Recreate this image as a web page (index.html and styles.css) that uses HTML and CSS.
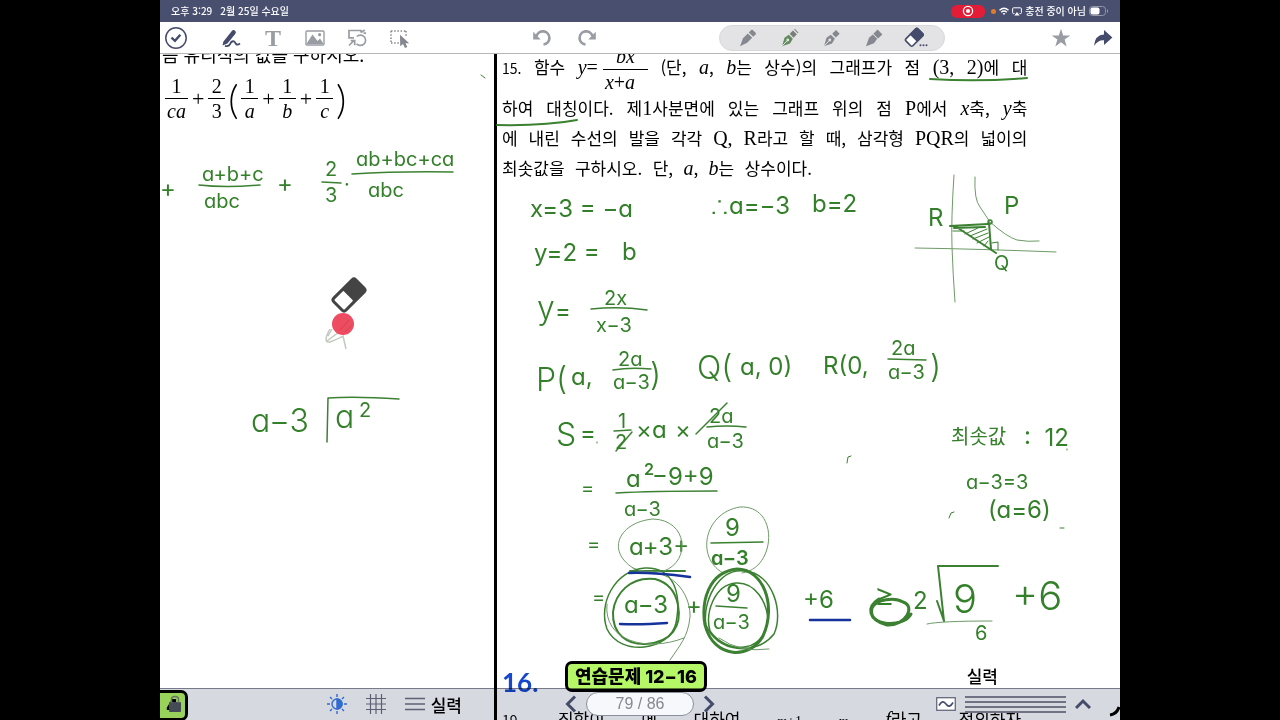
FILE: index.html
```html
<!DOCTYPE html>
<html lang="ko">
<head>
<meta charset="utf-8">
<title>연습문제 12-16</title>
<meta name="viewport" content="width=device-width, initial-scale=1">
<link rel="stylesheet" href="styles.css">
</head>
<body>
<div class="app">
  <header class="status">
    <span>오후 3:29</span>
    <span>2월 25일 수요일</span>
    <div class="status-right">
      <span class="rec"><svg width="12" height="12" viewBox="0 0 12 12"><circle cx="6" cy="6" r="4.6" fill="none" stroke="#fff" stroke-width="1.3"/><circle cx="6" cy="6" r="2.1" fill="#fff"/></svg></span>
      <span class="dot"></span>
      <svg width="10" height="9" viewBox="0 0 10 9" fill="none" stroke="#fff" stroke-width="1.4"><path d="M.5 3.2Q5-.8 9.5 3.2M2.2 5.2Q5 2.8 7.8 5.2"/><path d="M3.6 6.4Q5 5.4 6.4 6.4L5 8Z" fill="#fff" stroke="none"/></svg>
      <svg width="10" height="9" viewBox="0 0 10 9"><path d="M2.5 6.6H1.6Q.6 6.6.6 5.6V1.8Q.6.8 1.6.8H8.4Q9.4.8 9.4 1.8V5.6Q9.4 6.6 8.4 6.6H7.5" fill="none" stroke="#fff"/><path d="M5 5 7.6 8.4H2.4Z" fill="#fff"/></svg>
      <span>충전 중이 아님</span>
      <svg width="20" height="10" viewBox="0 0 20 10"><rect x=".5" y=".5" width="16" height="9" rx="3" fill="none" stroke="#9297ab"/><rect x="1.5" y="1.5" width="9" height="7" rx="2" fill="#fff"/><path d="M18.5 3.5V6.5" stroke="#9297ab"/></svg>
    </div>
  </header>

  <nav class="toolbar" aria-label="도구">
    <div class="tools">
      <button class="done" aria-label="완료"><svg width="24" height="24" viewBox="0 0 24 24" fill="none" stroke="#454b6b"><circle cx="12" cy="12" r="10.2" stroke-width="1.5"/><path d="M7.5 11.7 11 14.8 16.3 8.8" stroke-width="2.4"/></svg></button>
      <button aria-label="펜"><svg width="24" height="24" viewBox="0 0 24 24"><path d="M4.3 15.8 12.6 5.2Q14.2 3.2 16 4.6 17.8 6.2 16.2 8.1L8.4 17.6 3.5 19.6Z" fill="#454b6b"/><path d="M6 19.8Q9.5 21 11 18.2 12.6 14.6 15 15.4 16.2 16.4 17 18 18.4 19.4 21 17.6" fill="none" stroke="#454b6b" stroke-width="1.8"/></svg></button>
      <button class="letter" aria-label="글자">T</button>
      <button aria-label="사진"><svg width="24" height="24" viewBox="0 0 24 24"><rect x="3" y="5" width="18" height="14" rx="1" fill="none" stroke="#999ca2" stroke-width="1.4"/><path d="M4 17 9.5 8.5 14.5 15 17 12.5 20 17V18H4Z" fill="#999ca2"/><circle cx="16.6" cy="8.7" r="1.6" fill="#999ca2"/></svg></button>
      <button aria-label="도형"><svg width="24" height="24" viewBox="0 0 24 24" fill="none" stroke="#999ca2" stroke-width="1.7"><path d="M9 11.8H4V4.5H16V6.5M16 6.5 19.8 4M18.5 7.2H21"/><path d="M11.8 10.5A5.2 5.2 0 1 1 11.5 17.7M4 19.5 9.5 14M5.7 14.7H9.7V19.2"/></svg></button>
      <button aria-label="선택"><svg width="24" height="24" viewBox="0 0 24 24"><path d="M4 5H19M4 5V17M4 17H13M19 5V10" fill="none" stroke="#85888e" stroke-width="1.5" stroke-dasharray="1.5 1.7"/><path d="M13 8.8 22.2 17.2H18.5L20.3 21 18 22 16 18 13.2 20.2Z" fill="#85888e"/></svg></button>
    </div>
    <div class="history">
      <button aria-label="실행 취소"><svg width="22" height="22" viewBox="0 0 22 22"><path d="M5.5 9A6.6 6.6 0 1 1 12.5 17.5" fill="none" stroke="#999ca2" stroke-width="2.7"/><path d="M2.2 4.8V12.4H9.7Z" fill="#999ca2"/></svg></button>
      <button aria-label="다시 실행"><svg width="22" height="22" viewBox="0 0 22 22"><path d="M16.5 9A6.6 6.6 0 1 0 9.5 17.5" fill="none" stroke="#999ca2" stroke-width="2.7"/><path d="M19.8 4.8V12.4H12.3Z" fill="#999ca2"/></svg></button>
    </div>
    <div class="pens">
      <button aria-label="연필"><svg width="22" height="22" viewBox="0 0 22 22" fill="#85888e"><path d="M3 19.2 6 11.3 10.8 6.4 15.2 10.8 10.2 15.8Z"/><path d="M11.8 5.4 14.2 3Q15 2.3 15.8 3L18.6 5.8Q19.4 6.6 18.6 7.4L16.2 9.8Z"/></svg></button>
      <button aria-label="초록 펜"><svg width="22" height="22" viewBox="0 0 22 22"><path d="M3 19.2 5.5 10.7 9.8 7.8 13.8 11.8 11 16.4Z" fill="#608b5b"/><path d="M3 19.2 8.2 13.6" stroke="#e3e3e5"/><circle cx="8.8" cy="13" r="1.4" fill="#e3e3e5"/><path d="M10.7 6.8 14 3.5 17.8 7.3 14.6 10.7ZM15 2.5 16 2 19.4 5.4 18.8 6.3Z" fill="#777f78"/></svg></button>
      <button aria-label="만년필"><svg width="22" height="22" viewBox="0 0 22 22" fill="#85888e"><path d="M3 19.2 5.5 10.7 9.8 7.8 13.8 11.8 11 16.4Z"/><path d="M3 19.2 8.2 13.6" stroke="#e3e3e5"/><circle cx="8.8" cy="13" r="1.4" fill="#e3e3e5"/><path d="M11.2 6.8 15 3 18.7 6.7 14.8 10.6Z"/></svg></button>
      <button aria-label="형광펜"><svg width="22" height="22" viewBox="0 0 22 22" fill="#85888e"><path d="M3 19.2 6 10.8 9.8 7.4 14.2 11.8 11 16.2Z"/><path d="M10.4 6.8 14.6 2.6 19.4 7.4 15 11.6Z"/></svg></button>
      <button aria-label="지우개"><svg width="26" height="24" viewBox="0 0 26 24"><g transform="rotate(-45 11 11.5)"><rect x="2.8" y="6.7" width="17" height="9.8" rx="1.5" fill="#fff" stroke="#454b6b" stroke-width="1.7"/><path d="M10 6H19Q20.5 6 20.5 7.5V15.5Q20.5 17 19 17H10Z" fill="#454b6b"/></g><g fill="#454b6b"><circle cx="17.5" cy="19.3" r="1"/><circle cx="20.5" cy="19.3" r="1"/><circle cx="23.5" cy="19.3" r="1"/></g></svg></button>
    </div>
    <div class="actions">
      <button aria-label="즐겨찾기"><svg width="22" height="22" viewBox="0 0 22 22"><path d="M11 1.8 13.2 8.6H20.3L14.6 12.6 16.7 19.4 11 15.3 5.3 19.4 7.4 12.6 1.7 8.6H8.8Z" fill="#999ca2"/></svg></button>
      <button aria-label="공유"><svg width="22" height="22" viewBox="0 0 22 22"><path d="M2 19Q3 8 12 7.6V3L20.4 10.6 12 18V13.2Q6 12.6 2 19Z" fill="#454b6b"/></svg></button>
    </div>
  </nav>

  <main class="page">
    <section class="col col-left">
      <p class="ask">음 유리식의 값을 구하시오.</p>
      <div class="formula">
        <span class="frac"><span>1</span><i>ca</i></span><span class="plus">+</span>
        <span class="frac"><span>2</span><span>3</span></span>
        <span class="paren">(</span>
        <span class="frac"><span>1</span><i>a</i></span><span class="plus">+</span>
        <span class="frac"><span>1</span><i>b</i></span><span class="plus">+</span>
        <span class="frac"><span>1</span><i>c</i></span>
        <span class="paren">)</span>
      </div>
      <div class="next-left"><span class="tag tag-cut">4</span><strong class="level">실력</strong></div>
    </section>

    <section class="col col-right">
      <div class="problem">
        <p class="line line-frac"><small>15.</small> 함수 <span class="m"><i>y</i>=<span class="frac wide"><i>bx</i><span><i>x</i>+<i>a</i></span></span></span> (단, <i class="m">a</i>, <span><i class="m">b</i>는</span> 상수)의 그래프가 점 <span class="m">(3,</span> <span class="m">2)</span>에 대</p>
        <p class="line">하여 대칭이다. 제<span class="m">1</span>사분면에 있는 그래프 위의 점 <span class="m">P</span>에서 <i class="m">x</i>축, <i class="m">y</i>축</p>
        <p class="line">에 내린 수선의 발을 각각 <span class="m">Q,</span> <span class="m">R</span>라고 할 때, 삼각형 <span class="m">PQR</span>의 넓이의</p>
        <p class="line line-last">최솟값을 구하시오. 단, <i class="m">a</i>, <i class="m">b</i>는 상수이다.</p>
      </div>
      <div class="next">
        <div class="heading"><b class="number">16.</b><span class="tag">연습문제 12−16</span><strong class="level">실력</strong></div>
        <p class="line"><small>19.</small> 집합이 에 대하여 <small class="m"><i>m</i>+1</small> <small class="m"><i>m</i></small> <span><i class="m">f</i>라고</span> 정의하자</p>
      </div>
    </section>

    <svg class="ink" viewBox="160 54 960 666" preserveAspectRatio="xMidYMin slice">
      <g class="hand">
        <!-- left column working -->
        <g class="s20">
          <text x="160" y="197" class="s24">+</text><text x="202" y="181">a+b+c</text><text x="204" y="208">abc</text>
          <text x="277" y="192" class="s24">+</text><text x="325" y="176">2</text><text x="325" y="202">3</text><text x="344" y="191">·</text>
          <text x="356" y="166">ab+bc+ca</text><text x="368" y="197">abc</text>
        </g>
        <text class="s32" x="251" y="432">a−3</text><text class="s32" x="335" y="428">a</text><text class="s20" x="359" y="417">2</text>
        <!-- right column working -->
        <g class="s24">
          <text x="530" y="217">x=3 = −a</text><text x="710" y="214">∴a=−3</text><text x="812" y="212">b=2</text>
          <text x="534" y="261">y=2 =</text><text x="622" y="260">b</text>
          <text x="537" y="319" class="s32">y</text><text x="555" y="319">=</text>
          <text x="928" y="226">R</text><text x="1004" y="214">P</text><text x="994" y="270" class="s20">Q</text>
        </g>
        <g class="s20">
          <text x="604" y="305">2x</text><text x="596" y="332">x−3</text>
          <text x="618" y="366">2a</text><text x="613" y="389">a−3</text>
          <text x="891" y="355">2a</text><text x="888" y="379">a−3</text>
          <text x="709" y="423">2a</text><text x="707" y="448">a−3</text>
          <text x="618" y="428">1</text><text x="615" y="449">2</text>
          <text x="624" y="516">a−3</text><text x="581" y="495">=</text><text x="587" y="551">=</text><text x="592" y="604">=</text>
        </g>
        <g class="s24">
          <text class="s32" x="536" y="391">P(</text><text x="571" y="385">a,</text><text class="s32" x="650" y="386">)</text>
          <text class="s32" x="697" y="379">Q(</text><text x="740" y="375">a, 0)</text>
          <text x="823" y="374">R(0,</text><text class="s32" x="930" y="378">)</text>
          <text class="s32" x="556" y="446">S</text><text x="580" y="441">=</text>
          <text x="636" y="438">×</text><text x="652" y="438">a</text><text x="675" y="438">×</text>
          <text x="626" y="487">a</text><text x="652" y="485">−9+9</text>
          <text x="629" y="555">a+3+</text><text x="725" y="536">9</text>
          <text x="711" y="565" class="bold s20">a−3</text>
          <text x="624" y="613">a−3</text><text x="686" y="614">+</text><text x="726" y="602">9</text><text x="713" y="629" class="s20">a−3</text>
          <text x="803" y="608">+6</text><text x="913" y="609">2</text>
          <text x="874" y="606" class="s32">≥</text>
          <text x="953" y="613" class="s40">9</text><text x="1012" y="610" class="s40">+6</text><text x="975" y="640" class="s20">6</text>
        </g>
        <text class="s16 bold" x="644" y="475">2</text>
        <text class="s20 ko" x="951" y="444">최솟값</text><text class="s24" x="1024" y="446">:  12</text>
        <text class="s20" x="966" y="489">a−3=3</text><text class="s24" x="988" y="518">(a=6)</text>
      </g>

      <g class="stroke">
        <path d="M199 185Q225 188 260 185M322 182 341 183M352 174Q400 171 453 172"/>
        <path d="M327 442 328 398Q355 396 399 399"/>
        <path d="M591 309Q620 306 647 310M613 370Q630 367 651 369M888 359 926 360"/>
        <path d="M614 431 631 430M616 451 632 432M696 434 727 403M707 427Q727 425 746 427"/>
        <path d="M616 493Q650 491 717 491M711 543 763 542M716 606 747 608"/>
        <path class="thin" d="M927 624Q940 621 992 621"/>
        <path class="mid" d="M937 601 944 621 938 566 998 566"/>
        <path class="mid" d="M497 125Q545 126 577 120M930 79Q980 82 1027 78M630 571H685"/>
        <!-- hyperbola sketch -->
        <path class="thin" d="M954 175Q951 220 952 247Q953 275 955 302M915 248Q980 249 1056 252M975 177Q974 200 980 207L990 222Q1007 237 1017 240 1028 242 1039 241"/>
        <path class="mid" d="M950 226 988 224M954 228 985 227M955 226 996 253M989 223 991 249"/>
        <path class="fine" d="M953 231H964M992 243 998 242V250M965 234 978 228M970 236 987 229M973 239 988 233M977 243 989 237M984 246 988 241"/>
        <circle cx="990" cy="222" r="2"/>
        <!-- rings round the paired terms -->
        <path class="thin" d="M633 568C605 550 620 522 653 519C688 520 691 561 664 571Q645 574 633 568ZM725 574C695 560 703 513 740 507C780 505 776 569 742 573"/>
        <path d="M645 568C614 571 598 604 607 629C620 657 670 651 676 623C682 592 673 567 645 568Z"/>
        <path class="mid" d="M655 579C630 576 615 594 613 612C612 635 628 645 646 644C672 642 682 626 678 605Q674 584 655 579Z"/>
        <path class="thin" d="M636 572C680 567 691 602 690 617C688 637 680 645 670 660M607 604C603 640 645 653 684 638"/>
        <path class="bold-stroke" d="M737 569C708 572 701 602 705 625C714 660 751 659 763 636C777 605 763 569 737 569Z"/>
        <path d="M745 571C773 573 784 613 774 634C756 657 716 652 706 625C702 603 718 567 745 571ZM736 583C714 585 705 613 710 631C724 652 763 657 768 620C767 603 756 582 736 583Z"/>
        <path class="thin" d="M719 638Q740 653 769 649"/>
        <path class="bold-stroke" d="M879 599C866 607 868 620 887 625C906 626 916 606 903 602C895 597 876 599 872 608C867 627 904 628 911 614"/>
        <path class="fine" d="M847 463 848 457 851 456M949 518 951 513 954 512M481 75 485 78M1060 528H1064M1067 449V450M597 442V443"/>
      </g>
      <path class="blue" d="M629 573Q650 572 690 577M620 624Q640 625 667 623M810 620H850"/>
      <!-- eraser cursor -->
      <path d="M330 329Q322 343 330 342 340 338 343 336L346 349M328 336 332 329M327 341 339 332" fill="none" stroke="#c3c9bf" stroke-width="1.5"/>
      <circle cx="343" cy="324" r="11" fill="#ee4c61"/>
      <path d="M340 330 349 320M345 332 351 326" stroke="#d14352"/>
      <g transform="rotate(-45 349 295)"><rect x="332" y="285" width="34" height="20" rx="4" fill="#444445"/><rect x="335" y="288" width="13" height="14" rx="1" fill="#fff"/></g>
      <path d="M1119 707Q1117 714 1110 715" fill="none" stroke="#000" stroke-width="3"/>
    </svg>

    <footer class="dock">
      <svg class="lock" width="14" height="18" viewBox="0 0 14 18"><rect x="1" y="7" width="12" height="10" rx="1" fill="#454b55"/><path d="M3.5 8V4.5Q3.5 1.5 7 1.5T10.5 4.5V8" fill="none" stroke="#687067" stroke-width="1.5"/></svg>
      <div class="dock-left">
        <button aria-label="밝기"><svg width="20" height="20" viewBox="0 0 20 20" fill="none" stroke="#316ad0" stroke-width="1.4"><circle cx="10" cy="10" r="5"/><path d="M10 5A5 5 0 0 1 10 15Z" fill="#316ad0"/><path d="M10 0V3M10 17V20M0 10H3M17 10H20M3 3 5 5M15 15 17 17M17 3 15 5M5 15 3 17"/></svg></button>
        <button aria-label="격자"><svg width="20" height="20" viewBox="0 0 20 20" fill="none" stroke="#5c6174" stroke-width="1.2"><path d="M4.5 0V20M10 0V20M15.5 0V20M0 4.5H20M0 10H20M0 15.5H20"/></svg></button>
        <button aria-label="줄"><svg width="20" height="20" viewBox="0 0 20 20" fill="none" stroke="#5c6174" stroke-width="1.3"><path d="M0 4.5H20M0 10H20M0 15.5H20"/></svg></button>
      </div>
      <div class="pager">
        <button aria-label="이전"><svg width="12" height="18" viewBox="0 0 12 18" fill="none" stroke="#454b6b" stroke-width="3"><path d="M10 1.5 2.5 9 10 16.5"/></svg></button>
        <output class="count">79 / 86</output>
        <button aria-label="다음"><svg width="12" height="18" viewBox="0 0 12 18" fill="none" stroke="#454b6b" stroke-width="3"><path d="M2 1.5 9.5 9 2 16.5"/></svg></button>
      </div>
      <div class="dock-right">
        <button aria-label="선 모양"><svg width="20" height="14" viewBox="0 0 20 14"><rect x=".7" y=".7" width="18.6" height="12.6" fill="#fff" stroke="#666b7d" stroke-width="1.3"/><path d="M3 8.5Q6.5 2 10 7T17 5.5" fill="none" stroke="#454b6b" stroke-width="1.6"/></svg></button>
        <span class="rules"></span>
        <button aria-label="펼치기"><svg width="16" height="12" viewBox="0 0 16 12" fill="none" stroke="#454b6b" stroke-width="3"><path d="M1 10 8 3 15 10"/></svg></button>
      </div>
    </footer>
  </main>
</div>
</body>
</html>
```

FILE: styles.css
```css
* { box-sizing: border-box; }

body {
  margin: 0;
  background: #000;
  color: #000;
  font-family: "Noto Sans CJK KR", sans-serif;
}

button {
  display: grid;
  place-items: center;
  padding: 0;
  border: 0;
  background: none;
  font: inherit;
}

svg { display: block; }
p { margin: 0; }

.app {
  display: grid;
  grid-template-rows: 22px 32px 1fr;
  width: 75%;
  height: 100vh;
  margin: 0 auto;
  background: #fff;
}

/* status bar */
.status {
  display: flex;
  align-items: center;
  gap: 8px;
  padding: 0 11px;
  background: #49506f;
  color: #fff;
  font-size: 10px;
  font-weight: 500;
  line-height: 12px;
}

.status-right {
  display: flex;
  align-items: center;
  gap: 3px;
  margin-left: auto;
}

.rec {
  display: grid;
  place-items: center;
  width: 34px;
  height: 13px;
  margin-right: 3px;
  border-radius: 6px;
  background: #e51c35;
}

.dot {
  width: 5px;
  height: 5px;
  border-radius: 50%;
  background: #e07c2c;
}

/* toolbar */
.toolbar {
  position: relative;
  z-index: 3;
  display: flex;
  align-items: center;
  justify-content: space-between;
  padding: 0 1px 0 4px;
  background: #fff;
  border-bottom: 1px solid #b6b6b8;
}

.tools, .history, .actions, .pens { display: flex; align-items: center; }
.tools button { width: 42px; }
.tools .done { width: 24px; margin-right: 22px; }
.tools .letter {
  color: #999ca2;
  font: bold 24px/24px "Liberation Serif", serif;
}
.history { padding-right: 10px; }
.history button { width: 45px; }
.pens {
  height: 26px;
  padding: 0 7px;
  border: 1px solid #d8d8da;
  border-radius: 13px;
  background: #e3e3e5;
}
.pens button { width: 42px; }
.actions { gap: 10px; }
.actions button { width: 32px; }

/* document */
.page {
  position: relative;
  display: grid;
  grid-template-columns: 35% 65%;
  overflow: hidden;
}

.col {
  display: flex;
  flex-direction: column;
  justify-content: space-between;
  min-width: 0;
}

.col-right { padding-left: 5px; border-left: 3px solid #000; margin-left: -2px; }

.ask {
  margin: -12px 0 0 2px;
  font-size: 18px;
  line-height: 24px;
  word-break: keep-all;
}

.m, .formula { font-family: "Liberation Serif", serif; font-size: 20px; line-height: 20px; }

.formula {
  display: flex;
  align-items: center;
  gap: 4px;
  margin: 8px 0 auto 5px;
}

.frac {
  display: inline-flex;
  flex-direction: column;
  align-items: center;
  min-width: 17px;
  line-height: 24px;
  vertical-align: middle;
}
.frac > :last-child { padding: 0 2px; border-top: 1px solid #000; align-self: stretch; text-align: center; }
.frac.wide { margin-left: 5px; min-width: 45px; line-height: 25px; }
.plus { font-size: 22px; }
.paren {
  display: flex;
  justify-content: center;
  width: 8px;
  font-family: Lato, sans-serif;
  font-size: 40px;
  font-weight: 300;
  line-height: 48px;
}

.problem { margin-top: -14px; width: 85%; }

.line {
  font-size: 17px;
  line-height: 30px;
  text-align: justify;
  text-align-last: justify;
  white-space: nowrap;
}
.line small { font-size: 14px; }
.line-frac { height: 53px; line-height: 53px; }
.line-last { width: 59%; }

.next { height: 60px; }
.heading { display: flex; align-items: center; height: 32px; }
.number { width: 63px; color: #1548cd; font: bold 26px/44px Lato, sans-serif; padding-top: 12px; }

.tag {
  padding: 0 7px;
  border: 3px solid #000;
  border-radius: 7px;
  background: #b5f767;
  font-family: Inter, "Noto Sans CJK KR", sans-serif;
  font-size: 18px;
  font-weight: 800;
  line-height: 25px;
  white-space: nowrap;
}

.level { font-size: 17px; font-weight: 500; line-height: 24px; }
.heading .level { margin: 0 122px 0 auto; }
.next .line { width: 84%; padding-top: 12px; }

.next-left { display: flex; align-items: center; height: 30px; }
.tag-cut { width: 28px; padding: 0 6px; border-left: 0; border-radius: 0 7px 7px 0; }
.next-left .level { margin-left: auto; margin-right: 34px; }

/* pen layer */
.ink {
  position: absolute;
  inset: 0;
  width: 100%;
  height: 100%;
}

.hand {
  fill: #34802a;
  font-family: Inter, sans-serif;
  font-weight: 400;
  font-feature-settings: "cv11";
}
.hand text { white-space: pre; }
.s16 { font-size: 16px; }
.s20 { font-size: 20px; }
.s24 { font-size: 24px; }
.s32 { font-size: 32px; font-weight: 300; }
.s40 { font-size: 40px; font-weight: 300; }
.bold { font-weight: 600; }
.ko { font-family: "Noto Sans CJK KR", sans-serif; }

.stroke { fill: none; stroke: #3b8131; stroke-width: 1.5; stroke-linecap: round; stroke-linejoin: round; }
.stroke .thin { stroke: #6d9a67; stroke-width: 1; }
.stroke .fine { stroke-width: 1; }
.stroke .mid { stroke-width: 2; }
.stroke .bold-stroke { stroke-width: 3; }
.blue { fill: none; stroke: #15339a; stroke-width: 2.5; stroke-linecap: round; }

/* bottom dock */
.dock {
  position: absolute;
  inset: auto 0 0;
  display: grid;
  grid-template-columns: 1fr auto 1fr;
  align-items: center;
  height: 32px;
}
.dock::before {
  content: "";
  position: absolute;
  inset: 0;
  background: #d6d9e0;
  border-top: 1px solid #777b89;
  mix-blend-mode: multiply;
}
.dock > * { position: relative; }
.dock .lock { position: absolute; left: 8px; top: 7px; }
.dock-left { grid-column: 1; display: flex; justify-content: flex-end; gap: 19px; padding-right: 140px; }
.pager { grid-column: 2; display: flex; align-items: center; gap: 9px; }
.count {
  width: 108px;
  height: 24px;
  border: 1px solid #8b8f9b;
  border-radius: 12px;
  background: #f7f8fb;
  color: #858890;
  font: 16px/22px "Liberation Sans", sans-serif;
  text-align: center;
}
.dock-right { grid-column: 3; display: flex; align-items: center; justify-content: flex-end; gap: 9px; padding-right: 29px; }
.rules {
  width: 101px;
  height: 17px;
  background: repeating-linear-gradient(#6e7283 0 2px, transparent 2px 5px);
}
```
